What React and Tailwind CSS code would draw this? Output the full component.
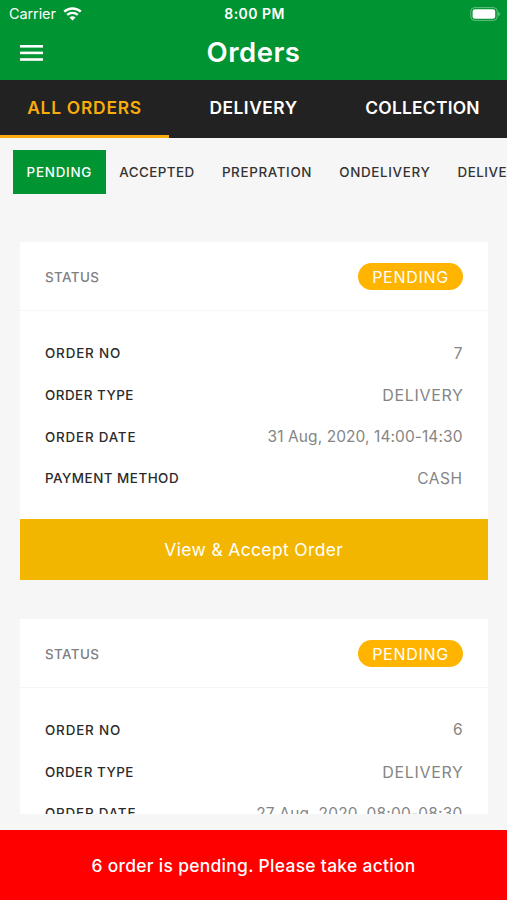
import React from "react";
import { useState } from "react";

const orders = [
  {
    no: "7",
    type: "DELIVERY",
    date: "31 Aug, 2020, 14:00-14:30",
    dateClass: "tracking-[0.08px]",
    payment: "CASH",
  },
  {
    no: "6",
    type: "DELIVERY",
    date: "27 Aug, 2020, 08:00-08:30",
    dateClass: "tracking-[0.2px]",
    payment: "CASH",
  },
];

const tabs = [
  { name: "ALL ORDERS", className: "tracking-[0.75px] text-[17.4px]" },
  { name: "DELIVERY", className: "tracking-[0.5px] text-[17.4px]" },
  { name: "COLLECTION", className: "tracking-[0.25px] text-[17.4px]" },
];

const filters = [
  { name: "PENDING", className: "tracking-[0.75px]" },
  { name: "ACCEPTED", className: "tracking-[0.45px]" },
  { name: "PREPRATION", className: "tracking-[0.65px]" },
  { name: "ONDELIVERY", className: "tracking-[0.65px]" },
  { name: "DELIVERED", className: "tracking-[0.5px]" },
];

const StatusBar = () => (
  <div className="flex h-[27px] items-center justify-between pl-[9px] pr-[7px] text-white">
    <div className="flex w-[100px] items-center gap-[7px]">
      <span className="text-[14.5px] tracking-[-0.1px]">Carrier</span>
      <svg width="19" height="14" viewBox="0 0 19 14" fill="none">
        <path d="M1.2 4.6C5.9 0.3 13.1 0.3 17.8 4.6" stroke="white" strokeWidth="2.5" />
        <path d="M4.2 7.9C7.2 5.2 11.8 5.2 14.8 7.9" stroke="white" strokeWidth="2.3" />
        <path d="M9.5 13.4L6.5 10.4C8.2 8.9 10.8 8.9 12.5 10.4Z" fill="white" />
      </svg>
    </div>
    <span className="text-[14px] font-semibold tracking-[0.45px]">8:00 PM</span>
    <div className="flex w-[100px] justify-end">
      <svg width="30" height="14" viewBox="0 0 30 14" fill="none">
        <rect x="0.8" y="0.6" width="26.4" height="12.8" rx="3.8" stroke="white" strokeOpacity="0.4" />
        <rect x="2.6" y="2.3" width="22.6" height="9.4" rx="2.2" fill="white" />
        <path d="M28.4 4.8C30.2 5.6 30.2 8.4 28.4 9.2Z" fill="white" fillOpacity="0.5" />
      </svg>
    </div>
  </div>
);

const Row = ({ label, labelClass, value, valueClass }) => (
  <div className="flex h-[41.7px] items-center justify-between pt-px">
    <span className={`text-[13.4px] font-medium text-[#2b2b2b] ${labelClass}`}>{label}</span>
    <span className={`text-[#858585] ${valueClass}`}>{value}</span>
  </div>
);

const OrderCard = ({ order }) => (
  <div className="mb-[39px] bg-white">
    {/* status */}
    <div className="flex h-[69px] items-center justify-between border-b border-[#f6f6f6] pt-px pr-[24.5px] pl-[25px]">
      <span className="pt-px text-[13.4px] font-medium tracking-[0.4px] text-[#808080]">STATUS</span>
      <span className="flex h-[27px] w-[105px] items-center justify-center rounded-full bg-[#ffb400] pt-px text-[16px] tracking-[0.7px] text-white">
        PENDING
      </span>
    </div>
    {/* details */}
    <div className="px-[25px] pt-[21px] pb-5">
      <Row label="ORDER NO" labelClass="tracking-[0.85px]" value={order.no} valueClass="text-[15.5px]" />
      <Row
        label="ORDER TYPE"
        labelClass="tracking-[0.5px]"
        value={order.type}
        valueClass="-mr-px text-[16px] tracking-[0.65px]"
      />
      <Row
        label="ORDER DATE"
        labelClass="tracking-[0.8px]"
        value={order.date}
        valueClass={`text-[15.5px] ${order.dateClass}`}
      />
      <Row
        label="PAYMENT METHOD"
        labelClass="tracking-[0.5px]"
        value={order.payment}
        valueClass="text-[15.5px] tracking-[0.5px]"
      />
    </div>
    <button className="block h-[61px] w-full bg-[#f2b600] pt-[2px] text-[17.4px] tracking-[0.4px] text-white">
      View &amp; Accept Order
    </button>
  </div>
);

const App = () => {
  const [tab, setTab] = useState("ALL ORDERS");
  const [filter, setFilter] = useState("PENDING");

  return (
    <div className="flex h-screen w-full flex-col overflow-hidden bg-[#f6f6f6] font-['Inter',sans-serif] whitespace-nowrap">
      <header className="h-[79.5px] shrink-0 bg-[#009432]">
        <StatusBar />
        <div className="flex h-[51px] items-center justify-between px-5">
          <button>
            <svg width="23" height="16" viewBox="0 0 23 16" fill="white">
              <rect y="0" width="23" height="2.6" />
              <rect y="6.6" width="23" height="2.6" />
              <rect y="13.2" width="23" height="2.6" />
            </svg>
          </button>
          <h1 className="text-[27.5px] font-semibold tracking-[0.5px] text-white">Orders</h1>
          <div className="w-[23px]"></div>
        </div>
      </header>

      {/* tabs */}
      <nav className="grid h-[58px] shrink-0 grid-cols-3 bg-[#222222]">
        {tabs.map((t) => (
          <button
            key={t.name}
            onClick={() => setTab(t.name)}
            className={`border-b-3 pt-[3px] font-semibold ${t.className} ${
              tab === t.name ? "border-[#f9ad0c] text-[#f9ad0c]" : "border-transparent text-white"
            }`}
          >
            {t.name}
          </button>
        ))}
      </nav>

      {/* filters */}
      <div className="flex shrink-0 overflow-hidden px-[13px] pt-[12.5px]">
        {filters.map((f) => (
          <button
            key={f.name}
            onClick={() => setFilter(f.name)}
            className={`h-11 shrink-0 px-[13.6px] text-[13.4px] font-medium ${f.className} ${
              filter === f.name ? "bg-[#009432] text-white" : "text-[#333333]"
            }`}
          >
            {f.name}
          </button>
        ))}
      </div>

      <main className="mt-12 mr-[19.5px] ml-5 min-h-0 flex-1 overflow-hidden">
        {orders.map((order) => (
          <OrderCard key={order.no} order={order} />
        ))}
      </main>

      <footer className="mt-[15.5px] flex h-[70.5px] shrink-0 items-center justify-center bg-[#ff0000] pt-[2px] text-[17.4px] font-medium tracking-[0.32px] text-white">
        6 order is pending. Please take action
      </footer>
    </div>
  );
};

export default App;
